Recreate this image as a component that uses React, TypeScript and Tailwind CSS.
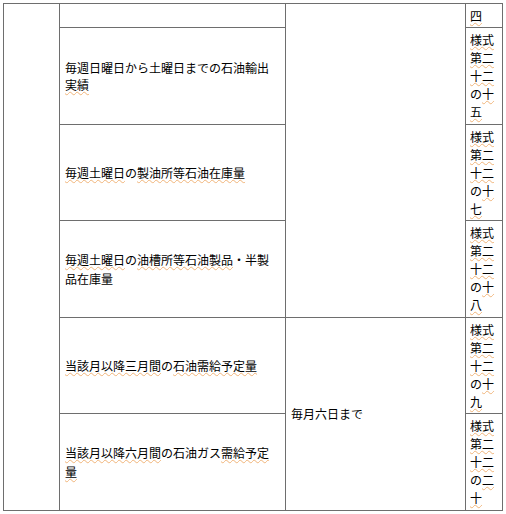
import React from "react";

const font = { fontFamily: '"MS PGothic", "Noto Sans CJK JP", sans-serif' };

const U: React.FC<{ children: React.ReactNode }> = ({ children }) => (
  <span className="underline decoration-wavy decoration-[#f0b47a] decoration-1 underline-offset-[1px]">
    {children}
  </span>
);

const cell = "border border-[#6e6e6e] px-[5px] align-middle";

// 様式 column: two characters per line
const FormCell: React.FC<{ tail: [string, string] }> = ({ tail }) => (
  <td className={`${cell} pl-[4px] pr-0 leading-[18px] whitespace-nowrap`}>
    <div>
      <U>様式</U>
    </div>
    <div>
      <U>第二</U>
    </div>
    <div>
      <U>十二</U>
    </div>
    <div>
      の<U>{tail[0]}</U>
    </div>
    <div>
      <U>{tail[1]}</U>
    </div>
  </td>
);

export default function App() {
  return (
    <div className="w-[506px] h-[514px] bg-white text-black text-[12px]" style={font}>
      <div className="pt-[3px] pl-[3px]">
        <table className="table-fixed border-collapse w-[499px]">
          <colgroup>
            <col className="w-[56px]" />
            <col className="w-[226px]" />
            <col className="w-[180px]" />
            <col className="w-[37px]" />
          </colgroup>
          <tbody>
            <tr className="h-[24px]">
              <td className={cell} rowSpan={6}></td>
              <td className={cell}></td>
              <td className={cell} rowSpan={4}></td>
              <td className={`${cell} pl-[4px] pr-0 leading-[18px]`}>
                <U>四</U>
              </td>
            </tr>
            <tr className="h-[97px]">
              <td className={`${cell} leading-[17px] whitespace-nowrap`}>
                <div>毎週日曜日から土曜日までの石油輸出</div>
                <div>
                  <U>実績</U>
                </div>
              </td>
              <FormCell tail={["十", "五"]} />
            </tr>
            <tr className="h-[96px]">
              <td className={`${cell} leading-[18px] whitespace-nowrap`}>
                <div>
                  <U>毎週土曜日</U>の<U>製油所等石油在庫量</U>
                </div>
              </td>
              <FormCell tail={["十", "七"]} />
            </tr>
            <tr className="h-[97px]">
              <td className={`${cell} leading-[19px] whitespace-nowrap`}>
                <div>
                  <U>毎週土曜日</U>の<U>油槽所等石油製品</U>・半製
                </div>
                <div>品在庫量</div>
              </td>
              <FormCell tail={["十", "八"]} />
            </tr>
            <tr className="h-[96px]">
              <td className={`${cell} leading-[18px] whitespace-nowrap`}>
                <div>
                  <U>当該月以降三月間</U>の<U>石油需給予定量</U>
                </div>
              </td>
              <td className={`${cell} whitespace-nowrap`} rowSpan={2}>
                毎月六日まで
              </td>
              <FormCell tail={["十", "九"]} />
            </tr>
            <tr className="h-[97px]">
              <td className={`${cell} leading-[19px] whitespace-nowrap`}>
                <div>
                  <U>当該月以降六月間</U>の石油ガス<U>需給予定</U>
                </div>
                <div>
                  <U>量</U>
                </div>
              </td>
              <FormCell tail={["二", "十"]} />
            </tr>
          </tbody>
        </table>
      </div>
    </div>
  );
}
